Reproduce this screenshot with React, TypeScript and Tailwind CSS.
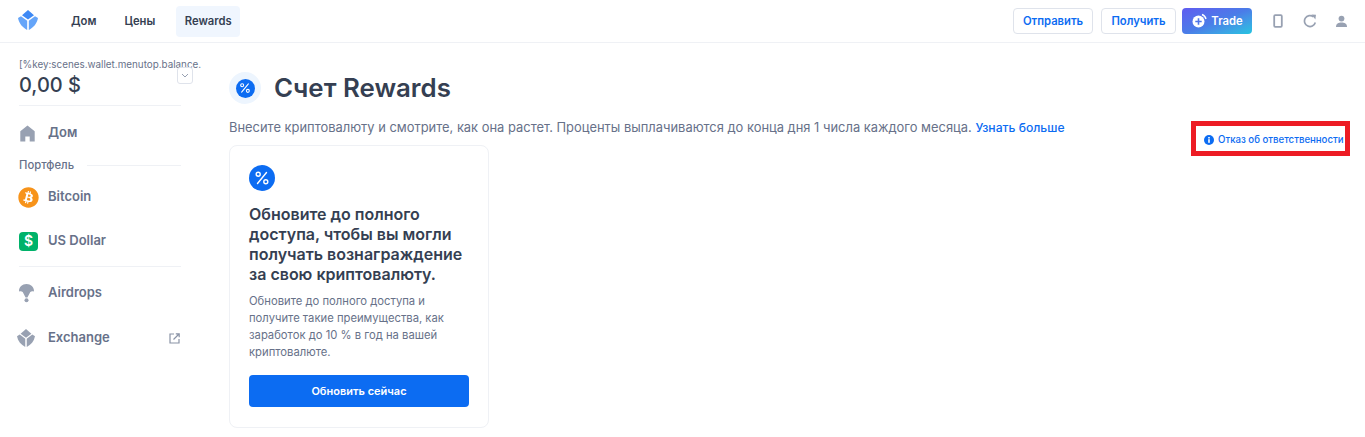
import React from "react";
import { FaBitcoin } from "react-icons/fa";

const Logo = ({ b = "#65A5F9", c = "#3D89F5", s = 20 }: { b?: string; c?: string; s?: number }) => (
  <svg width={s} height={s} viewBox="0 0 20 20">
    <path d="M10 0 L16 5.2 L10 9.6 L4 5.2 Z" fill={c} />
    <path d="M0 8 L3 6.2 L9.2 10.8 L9.2 20 C4.5 17.5 1 13.5 0 8 Z" fill={b} />
    <path d="M20 8 L17 6.2 L10.8 10.8 L10.8 20 C15.5 17.5 19 13.5 20 8 Z" fill={b} />
  </svg>
);

const Percent = ({ size, cls }: { size: number; cls: string }) => (
  <div className={`flex items-center justify-center rounded-full bg-[#0C6CF2] ${cls}`}>
    <svg width={size} height={size} viewBox="0 0 16 16" fill="none" stroke="white" strokeWidth="1.4" strokeLinecap="round">
      <path d="M12.5 2.5 L3.5 13.5" />
      <circle cx="4.2" cy="4.2" r="2" />
      <circle cx="11.8" cy="11.8" r="2" />
    </svg>
  </div>
);

const NavItem = ({ icon, label, cls = "" }: { icon: React.ReactNode; label: string; cls?: string }) => (
  <div className={`flex h-[20px] items-center ${cls}`}>
    <div className="flex w-[29px] shrink-0 items-center">{icon}</div>
    <span className="text-[13px] font-semibold text-[#677189]">{label}</span>
  </div>
);

export default function App() {
  return (
    <div className="relative h-[437px] w-[1365px] overflow-hidden bg-white font-['Inter',sans-serif] text-[#353F52]">
      <header className="flex h-[43px] items-center border-b border-[#EFF1F5] pl-[18px] pr-[17px]">
        <div className="-mt-[3px]">
          <Logo />
        </div>
        <nav className="ml-[25px] flex items-center text-[11.25px] font-semibold text-[#353F52]">
          <span className="mr-[12px] flex h-[31px] items-center px-[8px]">Дом</span>
          <span className="mr-[13px] flex h-[31px] items-center px-[8px]">Цены</span>
          <span className="flex h-[31px] w-[64px] items-center justify-center rounded-[4px] bg-[#F0F6FE]">Rewards</span>
        </nav>
        <div className="ml-auto flex items-center">
          <button className="flex h-[26px] w-[80px] items-center justify-center rounded-[4px] border border-[#DFE3EB] text-[11.25px] font-semibold text-[#0C6CF2]">Отправить</button>
          <button className="ml-[8px] flex h-[26px] w-[75px] items-center justify-center rounded-[4px] border border-[#DFE3EB] text-[11.25px] font-semibold text-[#0C6CF2]">Получить</button>
          <button className="ml-[6px] flex h-[26px] w-[70px] items-center justify-center gap-[4px] rounded-[4px] bg-gradient-to-br from-[#5F5BF0] via-[#4A7CE8] to-[#23C4E0] text-[11.25px] font-semibold text-white">
            <svg width="16" height="16" viewBox="0 0 16 16" fill="none">
              <circle cx="7.5" cy="8.5" r="6" fill="white" />
              <path d="M7.5 5.3 V11.7 M4.3 8.5 H10.7" stroke="#4F74E8" strokeWidth="1.6" />
              <path d="M11 1.5 A6.5 6.5 0 0 1 15 6" stroke="white" strokeWidth="1.4" />
            </svg>
            Trade
          </button>
          <svg className="ml-[21px]" width="10" height="14" viewBox="0 0 10 14" fill="none" stroke="#98A1B2" strokeWidth="1.8">
            <rect x="1.2" y="1.2" width="7.6" height="11.6" rx="1" />
          </svg>
          <svg className="ml-[20px]" width="14" height="14" viewBox="0 0 14 14" fill="none" stroke="#98A1B2" strokeWidth="1.7">
            <path d="M12.3 8.5 A5.5 5.5 0 1 1 10.5 2.8" />
            <path d="M8.5 0.5 L13 0.8 L12.4 5.5 Z" fill="#98A1B2" stroke="none" />
          </svg>
          <svg className="ml-[18px]" width="13" height="13" viewBox="0 0 13 13" fill="#98A1B2">
            <circle cx="6.5" cy="3.6" r="2.9" />
            <path d="M1 12 C1 8.8 3.5 7.6 6.5 7.6 C9.5 7.6 12 8.8 12 12 Z" />
          </svg>
        </div>
      </header>

      <div className="flex">
        <aside className="w-[229px] shrink-0 pl-[19px] pr-[48px] pt-[14px]">
          <div className="relative border-b border-[#EFF1F5] pb-[8px]">
            <div className="whitespace-nowrap text-[9.85px] leading-[14px] text-[#677189]">[%key:scenes.wallet.menutop.balance.</div>
            <div className="mt-[2px] text-[20px] font-medium leading-[24px] text-[#353F52]">0,00 $</div>
            <div className="absolute left-[158px] top-[10px] flex h-[17px] w-[16px] items-center justify-center rounded-[3px] border border-[#DFE3EB] bg-white">
              <svg width="8" height="5" viewBox="0 0 8 5" fill="none" stroke="#98A1B2" strokeWidth="1">
                <path d="M1 1 L4 4 L7 1" />
              </svg>
            </div>
          </div>
          <NavItem
            cls="mt-[17px]"
            label="Дом"
            icon={
              <svg width="17" height="17" viewBox="0 0 17 17" fill="#98A1B2">
                <path d="M8.5 0.5 L15.7 6.3 V16.5 H10.7 V11.5 H6.3 V16.5 H1.3 V6.3 Z" />
              </svg>
            }
          />
          <div className="mt-[15px] flex items-center">
            <span className="text-[11.25px] font-medium leading-[14px] text-[#677189]">Портфель</span>
            <div className="ml-[13px] h-px flex-1 bg-[#EFF1F5]" />
          </div>
          <NavItem cls="mt-[15px]" label="Bitcoin" icon={<FaBitcoin size={21} color="#F7931A" className="-ml-[1px]" />} />
          <NavItem
            cls="mt-[24px]"
            label="US Dollar"
            icon={
              <div className="flex h-[19px] w-[19px] items-center justify-center rounded-[4px] bg-[#00B26A] text-[14px] font-semibold leading-none text-white">$</div>
            }
          />
          <div className="mt-[15px] h-px bg-[#EFF1F5]" />
          <NavItem
            cls="mt-[16px]"
            label="Airdrops"
            icon={
              <svg width="15" height="19" viewBox="0 0 15 19" fill="#98A1B2">
                <path d="M7.5 0 C11.8 0 15 3 15 7 L14.9 7.6 C13.8 7 12.4 7 11.3 7.9 L8.4 13.6 H6.6 L3.7 7.9 C2.6 7 1.2 7 0.1 7.6 L0 7 C0 3 3.2 0 7.5 0 Z" />
                <circle cx="7.5" cy="16.3" r="2" />
              </svg>
            }
          />
          <div className="relative">
            <NavItem cls="mt-[25px]" label="Exchange" icon={<div className="-ml-[2px]"><Logo b="#98A1B2" c="#98A1B2" s={18} /></div>} />
            <svg className="absolute right-[1px] top-[5px]" width="11" height="11" viewBox="0 0 11 11" fill="none" stroke="#8A93A6" strokeWidth="1.2">
              <path d="M5 1 H1 V10 H10 V6" />
              <path d="M4.5 6.5 L10 1 M6.8 0.8 H10.2 V4.2" />
            </svg>
          </div>
        </aside>

        <main className="flex-1 pt-[29px]">
          <div className="flex items-center">
            <div className="flex h-[32px] w-[32px] items-center justify-center rounded-full bg-[#EDF5FE]">
              <Percent size={12} cls="h-[19px] w-[19px]" />
            </div>
            <h1 className="ml-[13px] text-[25.85px] font-semibold leading-[32px] text-[#353F52]">Счет Rewards</h1>
          </div>
          <p className="mt-[14px] whitespace-nowrap text-[12.92px] leading-[18px] text-[#677189]">
            Внесите криптовалюту и смотрите, как она растет. Проценты выплачиваются до конца дня 1 числа каждого месяца.{" "}
            <span className="text-[12.15px] font-medium text-[#0C6CF2]">Узнать больше</span>
          </p>
          <section className="mt-[8px] w-[260px] rounded-[8px] border border-[#EFF1F5] px-[19px] pt-[19px] pb-[20px]">
            <Percent size={16} cls="h-[26px] w-[26px]" />
            <h2 className="mt-[13px] text-[16px] font-semibold leading-[20px] text-[#353F52]">
              Обновите до полного доступа, чтобы вы могли получать вознаграждение за свою криптовалюту.
            </h2>
            <p className="mt-[9px] text-[11.25px] leading-[17px] text-[#677189]">
              Обновите до полного доступа и получите такие преимущества, как заработок до 10 % в год на вашей криптовалюте.
            </p>
            <button className="mt-[14px] flex h-[32px] w-full items-center justify-center rounded-[4px] bg-[#0C6CF2] text-[11px] font-semibold text-white">
              Обновить сейчас
            </button>
          </section>
        </main>
      </div>

      <div className="absolute left-[1191px] top-[121px] flex h-[35px] w-[159px] items-center border-[5px] border-[#ED1C24] pl-[8px] pt-[3px]">
        <svg width="10" height="10" viewBox="0 0 10 10">
          <circle cx="5" cy="5" r="5" fill="#0C6CF2" />
          <rect x="4.2" y="4.2" width="1.6" height="3.6" fill="white" />
          <rect x="4.2" y="2" width="1.6" height="1.5" fill="white" />
        </svg>
        <span className="ml-[4px] whitespace-nowrap text-[9.65px] font-medium text-[#0C6CF2]">Отказ об ответственности</span>
      </div>
    </div>
  );
}
